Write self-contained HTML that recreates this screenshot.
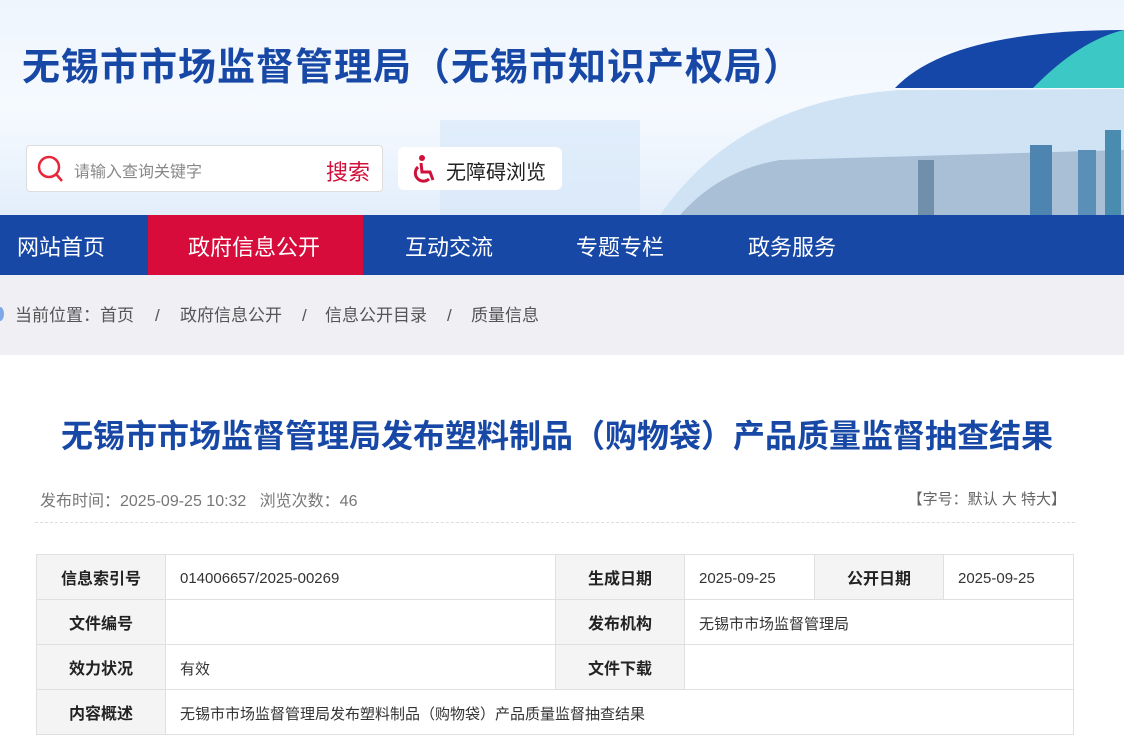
<!DOCTYPE html>
<html><head><meta charset="utf-8"><style>
*{margin:0;padding:0;box-sizing:border-box}
body{width:1124px;height:748px;overflow:hidden;background:#fff;font-family:"Liberation Sans","Noto Sans CJK SC",sans-serif;position:relative}
.hdr{position:absolute;left:0;top:0;width:1124px;height:215px;background:linear-gradient(180deg,#eef5fd 0%,#f6faff 50%,#e3eefb 100%);overflow:hidden}
.title{position:absolute;left:22px;top:36px;font-size:38px;font-weight:bold;color:#1848a6;letter-spacing:1px;white-space:nowrap}
.search{position:absolute;left:26px;top:145px;width:357px;height:47px;background:#fff;border:1px solid #ddd;border-radius:4px}
.search .ph{position:absolute;left:47px;top:12px;font-size:16px;color:#888}
.search .btn{position:absolute;right:12px;top:9px;font-size:22px;color:#d0103a}
.acc{position:absolute;left:398px;top:147px;width:164px;height:43px;background:#fff;border-radius:6px;font-size:20px;color:#222}
.nav{position:absolute;left:0;top:215px;width:1124px;height:60px;background:#1848a6}
.nav span{position:absolute;top:15px;font-size:22px;color:#fff}
.crumb{position:absolute;left:0;top:275px;width:1124px;height:80px;background:#efeff4;font-size:17px;color:#555}
.crumb b{font-weight:normal;position:absolute;top:29px;white-space:nowrap;line-height:24px;height:24px}
h1{position:absolute;left:0;width:1114px;top:411px;text-align:center;font-size:32px;color:#1848a6;font-weight:bold;white-space:nowrap}
.meta{position:absolute;left:40px;top:487px;font-size:16px;color:#777}
.meta2{position:absolute;right:58px;top:488px;font-size:15px;color:#666}
.dash{position:absolute;left:35px;top:522px;width:1040px;border-top:1px dashed #ddd}
table{position:absolute;left:36px;top:554px;border-collapse:collapse;width:1038px}
td{border:1px solid #e0e0e0;height:45px;font-size:15px;color:#333;padding-left:14px;padding-top:3px}
td.l{background:#f4f4f4;font-weight:bold;text-align:center;padding:0;color:#222;font-size:16px}
</style></head><body>
<div class="hdr">
<svg width="1124" height="215" style="position:absolute;left:0;top:0">
<path d="M895 88 Q950 30 1124 30 L1124 88 Z" fill="#1447a8"/>
<path d="M1033 88 Q1080 40 1124 30 L1124 88 Z" fill="#3cc9c5"/>
<path d="M660 215 Q740 100 900 90 L1124 89 L1124 215 Z" fill="#cfe3f5"/>
<path d="M680 215 Q720 170 780 160 L1124 150 L1124 215 Z" fill="#a9bfd6"/>
<rect x="1030" y="145" width="22" height="70" fill="#4e85b0"/>
<rect x="1078" y="150" width="18" height="65" fill="#5a8fb8"/>
<rect x="1105" y="130" width="16" height="85" fill="#4a8bb0"/>
<rect x="918" y="160" width="16" height="55" fill="#6f8faa"/>
<rect x="440" y="120" width="200" height="95" fill="#d6e6f8" opacity=".6"/>
</svg>
<div class="title">无锡市市场监督管理局（无锡市知识产权局）</div>
<div class="search"><svg width="28" height="30" style="position:absolute;left:10px;top:9px"><circle cx="12" cy="12" r="10" fill="none" stroke="#e8283a" stroke-width="2.5"/><line x1="19" y1="19" x2="25" y2="26" stroke="#e8283a" stroke-width="2.5"/></svg><span class="ph">请输入查询关键字</span><span class="btn">搜索</span></div>
<div class="acc"><svg width="26" height="30" style="position:absolute;left:14px;top:7px"><circle cx="10" cy="4" r="3" fill="#d0103a"/><path d="M9 9 L10 18 L18 18 L21 26" stroke="#d0103a" stroke-width="3" fill="none"/><path d="M6 13 A8 8 0 1 0 17 25" stroke="#d0103a" stroke-width="3" fill="none"/></svg><span style="position:absolute;left:48px;top:9px">无障碍浏览</span></div>
</div>
<div class="nav">
<span style="left:17px">网站首页</span>
<div style="position:absolute;left:148px;top:0;width:215px;height:60px;background:#d70c3a"></div>
<span style="left:188px">政府信息公开</span>
<span style="left:405px">互动交流</span>
<span style="left:576px">专题专栏</span>
<span style="left:748px">政务服务</span>
</div>
<div class="crumb"><div style="position:absolute;left:-4px;top:32px;width:8px;height:14px;border-radius:50%;background:#7ea7e6"></div>
<b style="left:15px">当前位置：首页</b><b style="left:155px">/</b><b style="left:180px">政府信息公开</b><b style="left:302px">/</b><b style="left:325px">信息公开目录</b><b style="left:447px">/</b><b style="left:471px">质量信息</b></div>
<h1>无锡市市场监督管理局发布塑料制品（购物袋）产品质量监督抽查结果</h1>
<div class="meta">发布时间：2025-09-25 10:32 &nbsp;&nbsp;浏览次数：46</div>
<div class="meta2">【字号：默认 大 特大】</div>
<div class="dash"></div>
<table>
<tr><td class="l" style="width:129px">信息索引号</td><td style="width:390px">014006657/2025-00269</td><td class="l" style="width:129px">生成日期</td><td style="width:130px">2025-09-25</td><td class="l" style="width:129px">公开日期</td><td>2025-09-25</td></tr>
<tr><td class="l">文件编号</td><td></td><td class="l">发布机构</td><td colspan="3">无锡市市场监督管理局</td></tr>
<tr><td class="l">效力状况</td><td>有效</td><td class="l">文件下载</td><td colspan="3"></td></tr>
<tr><td class="l">内容概述</td><td colspan="5">无锡市市场监督管理局发布塑料制品（购物袋）产品质量监督抽查结果</td></tr>
</table>
</body></html>
